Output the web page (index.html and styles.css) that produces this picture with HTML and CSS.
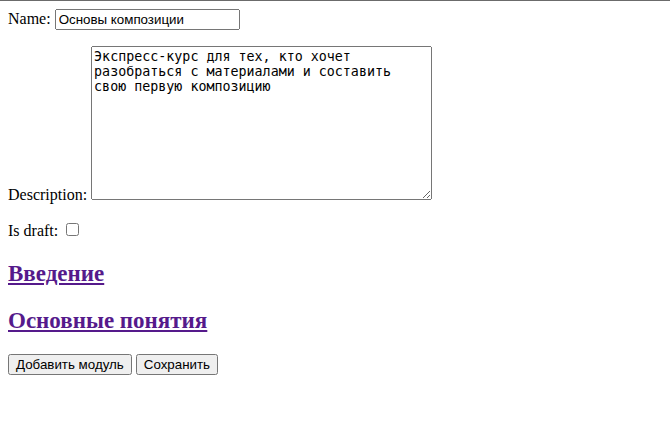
FILE: index.html
```html
<!DOCTYPE html>
<html>
<head>
<meta charset="utf-8">
<link rel="stylesheet" href="styles.css">
</head>
<body>
<form class="course-form">
  <div class="field first">Name: <input class="name-input" type="text" value="Основы композиции"></div>
  <p class="field">Description: <textarea class="desc-input">Экспресс-курс для тех, кто хочет разобраться с материалами и составить свою первую композицию</textarea></p>
  <p class="field">Is draft: <input class="draft-check" type="checkbox"></p>
  <h2 class="module"><a class="module-link" href="#m1">Введение</a></h2>
  <h2 class="module"><a class="module-link" href="#m2">Основные понятия</a></h2>
  <button class="btn" type="button">Добавить модуль</button>
  <button class="btn" type="submit">Сохранить</button>
</form>
</body>
</html>
```

FILE: styles.css
```css
html {
  border-top: 1px solid #6b6b6b;
}
body {
  margin: 8px;
  font-family: "Liberation Serif", serif;
  font-size: 16px;
  color: #000;
  background: #fff;
}
.first {
  margin: 0;
}
.name-input {
  font-family: "Liberation Sans", Arial, sans-serif;
  font-size: 13.33px;
  width: 185px;
  height: 21px;
  box-sizing: border-box;
  padding: 1px 2px;
}
.desc-input {
  font-family: "DejaVu Sans Mono", monospace;
  font-size: 13.33px;
  width: 341px;
  height: 154px;
  box-sizing: border-box;
  padding: 2px;
}
.module {
  font-size: 23px;
  line-height: 27px;
  margin: 19.92px 0;
}
.module-link {
  color: #551a8b;
}
.btn {
  font-family: "Liberation Sans", Arial, sans-serif;
  font-size: 13.33px;
}
```
